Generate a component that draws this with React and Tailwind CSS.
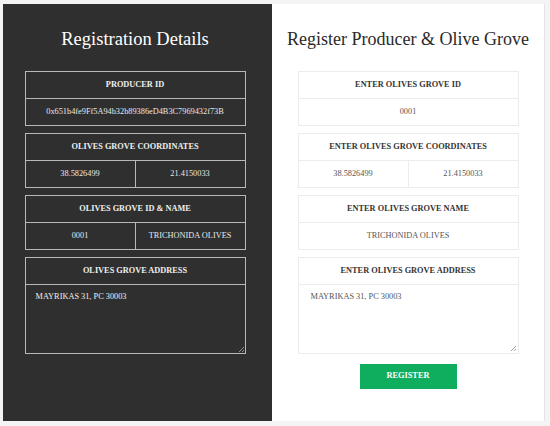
export default function App() {
  const serif = { fontFamily: '"Liberation Serif", "DejaVu Serif", serif' };
  const dCell = "flex items-center justify-center h-[26px] text-[8.3px] text-[#e8e8e8]";
  const dHead = "flex items-center justify-center h-[27px] text-[8.3px] font-bold text-[#f0f0f0] border-b border-[#b8b8b8]";
  const lHead = "flex items-center justify-center h-[27px] text-[8.3px] font-bold text-[#333] border-b border-[#ececec]";
  const lCell = "flex items-center justify-center h-[26px] text-[8.3px] text-[#555]";
  return (
    <div className="w-[550px] h-[426px] bg-[#f4f4f4] flex pl-[3px] pt-[4px]" style={serif}>
      <div className="w-[269px] h-[417px] bg-[#2f2f2f] flex flex-col items-center pr-[5px]">
        <h1 className="mt-[24px] h-[22px] text-[18.5px] leading-[22px] text-white">Registration Details</h1>
        <div className="mt-[21px] w-[221px] flex flex-col gap-[7px]">
          <div className="border border-[#b8b8b8]">
            <div className={dHead}>PRODUCER ID</div>
            <div className={dCell}>0x651b4fe9Ff5A94b32b89386eD4B3C7969432f73B</div>
          </div>
          <div className="border border-[#b8b8b8]">
            <div className={dHead}>OLIVES GROVE COORDINATES</div>
            <div className="flex">
              <div className={dCell + " flex-1 border-r border-[#b8b8b8]"}>38.5826499</div>
              <div className={dCell + " flex-1"}>21.4150033</div>
            </div>
          </div>
          <div className="border border-[#b8b8b8]">
            <div className={dHead}>OLIVES GROVE ID &amp; NAME</div>
            <div className="flex">
              <div className={dCell + " flex-1 border-r border-[#b8b8b8]"}>0001</div>
              <div className={dCell + " flex-1"}>TRICHONIDA OLIVES</div>
            </div>
          </div>
          <div className="border border-[#b8b8b8]">
            <div className={dHead}>OLIVES GROVE ADDRESS</div>
            <div className="relative h-[68px] px-[10px] pt-[6px] text-[8.3px] text-[#f0f0f0]">
              MAYRIKAS 31, PC 30003
              <svg className="absolute right-[1px] bottom-[1px]" width="6" height="6" viewBox="0 0 6 6">
                <path d="M6 1 L1 6 M6 4 L4 6" stroke="#aaa" strokeWidth="0.8" />
              </svg>
            </div>
          </div>
        </div>
      </div>
      <div className="w-[273px] h-[417px] bg-white border-r border-[#e4e4e4] flex flex-col items-center">
        <h1 className="mt-[24px] h-[22px] text-[18px] leading-[22px] text-[#2a2a2a]">Register Producer &amp; Olive Grove</h1>
        <div className="mt-[21px] w-[221px] flex flex-col gap-[7px]">
          <div className="border border-[#ececec]">
            <div className={lHead}>ENTER OLIVES GROVE ID</div>
            <div className={lCell}>0001</div>
          </div>
          <div className="border border-[#ececec]">
            <div className={lHead}>ENTER OLIVES GROVE COORDINATES</div>
            <div className="flex">
              <div className={lCell + " flex-1 border-r border-[#ececec]"}>38.5826499</div>
              <div className={lCell + " flex-1"}>21.4150033</div>
            </div>
          </div>
          <div className="border border-[#ececec]">
            <div className={lHead}>ENTER OLIVES GROVE NAME</div>
            <div className={lCell}>TRICHONIDA OLIVES</div>
          </div>
          <div className="border border-[#ececec]">
            <div className={lHead}>ENTER OLIVES GROVE ADDRESS</div>
            <div className="relative h-[68px] px-[12px] pt-[6px] text-[8.3px] text-[#555]">
              MAYRIKAS 31, PC 30003
              <svg className="absolute right-[2px] bottom-[2px]" width="6" height="6" viewBox="0 0 6 6">
                <path d="M6 1 L1 6 M6 4 L4 6" stroke="#888" strokeWidth="0.8" />
              </svg>
            </div>
          </div>
        </div>
        <button className="mt-[10px] w-[97px] h-[25px] bg-[#0fae5e] text-white text-[8.3px] font-bold flex items-center justify-center">REGISTER</button>
      </div>
    </div>
  );
}
